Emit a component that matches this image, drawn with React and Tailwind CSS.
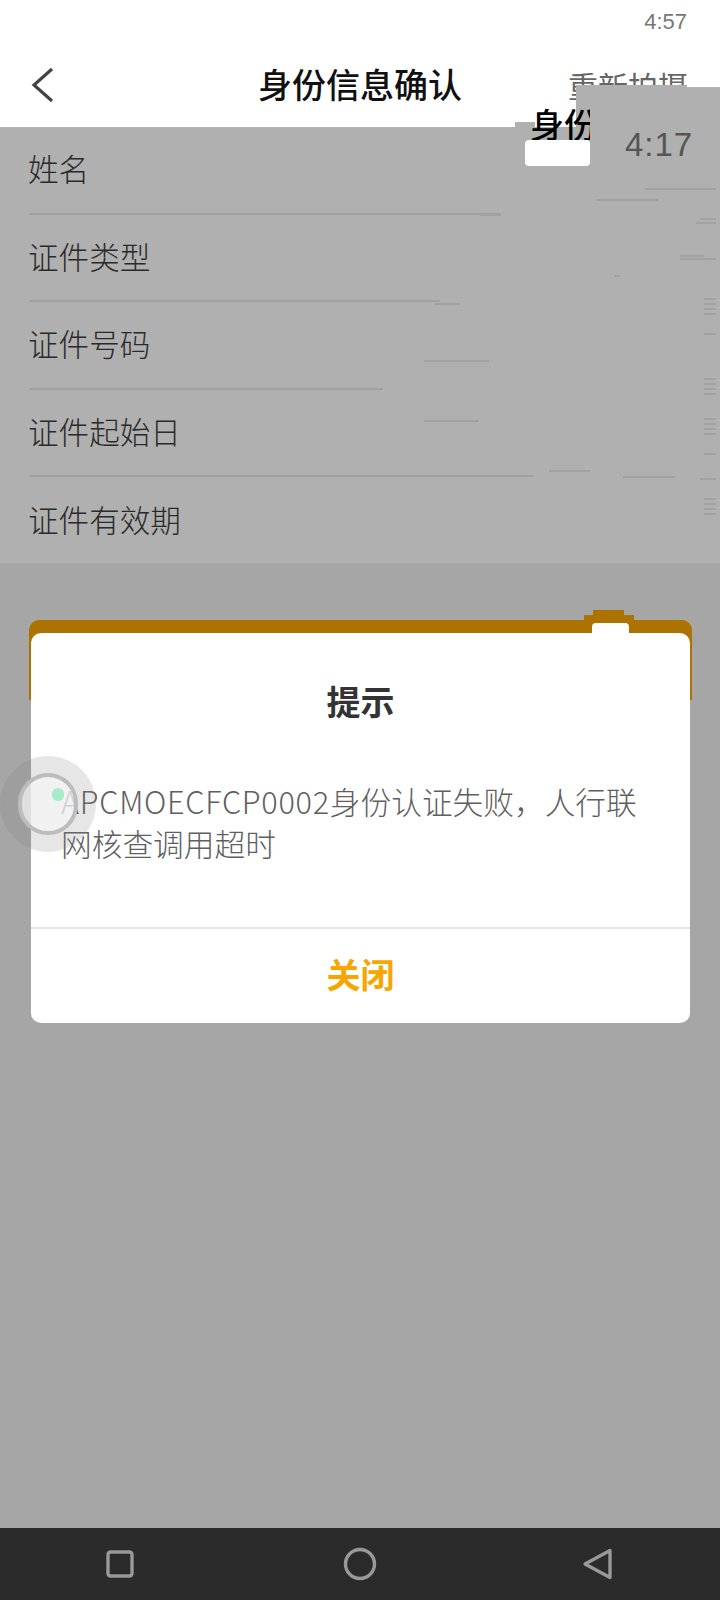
const cjk = "font-['Noto_Sans_CJK_SC',sans-serif]";

const rows = [
  { label: "姓名", line: "w-[472px]" },
  { label: "证件类型", line: "w-[411px]" },
  { label: "证件号码", line: "w-[354px]" },
  { label: "证件起始日", line: "w-[504px]" },
  { label: "证件有效期", line: "" },
];

// leftover ghost lines on the gray panel
const ghostLines = [
  { x: 645, y: 188, w: 71 }, { x: 597, y: 199, w: 61 }, { x: 480, y: 214, w: 21 },
  { x: 700, y: 108, w: 16 }, { x: 700, y: 218, w: 16 }, { x: 696, y: 222, w: 20 },
  { x: 680, y: 255, w: 24 }, { x: 680, y: 258, w: 36 }, { x: 614, y: 275, w: 6 },
  { x: 435, y: 303, w: 25 }, { x: 424, y: 360, w: 65 }, { x: 424, y: 420, w: 55 },
  { x: 549, y: 470, w: 41 }, { x: 623, y: 476, w: 52 }, { x: 700, y: 478, w: 16 },
  { x: 704, y: 298, w: 12 }, { x: 704, y: 303, w: 12 }, { x: 704, y: 308, w: 12 },
  { x: 704, y: 313, w: 12 }, { x: 704, y: 333, w: 12 }, { x: 704, y: 378, w: 12 },
  { x: 704, y: 383, w: 12 }, { x: 704, y: 388, w: 12 }, { x: 704, y: 393, w: 12 },
  { x: 704, y: 418, w: 12 }, { x: 704, y: 423, w: 12 }, { x: 704, y: 428, w: 12 },
  { x: 704, y: 433, w: 12 }, { x: 704, y: 453, w: 12 }, { x: 704, y: 498, w: 12 },
  { x: 704, y: 503, w: 12 }, { x: 704, y: 508, w: 12 }, { x: 704, y: 513, w: 12 },
];

export default function App() {
  return (
    <div className={`relative w-[720px] h-[1600px] overflow-hidden flex flex-col bg-[#a6a6a6] ${cjk}`}>
      {/* Status bar */}
      <div className="h-[44px] bg-white flex items-center justify-end pr-[33px]">
        <span className="font-['Liberation_Sans',sans-serif] text-[22px] leading-none text-[#777777]">4:57</span>
      </div>

      {/* Header */}
      <div className="h-[83px] bg-white relative flex items-center justify-center">
        <svg className="absolute left-[31px] top-[23px]" width="24" height="36" viewBox="0 0 24 36" fill="none">
          <path d="M21 2 L3 18 L21 34" stroke="#444444" strokeWidth="3.2" />
        </svg>
        <span className="text-[34px] leading-none font-medium text-[#111111] -mt-[3px]">身份信息确认</span>
        <span className="absolute left-[568px] top-[26px] text-[30px] leading-none text-[#666666]">重新拍摄</span>
      </div>

      {/* Form rows */}
      <div className="h-[436px] bg-[#b0b0b0] pl-[28px] shrink-0">
        {rows.map((row) => (
          <div key={row.label} className="h-[87.5px] flex flex-col">
            <div className="flex-1 flex items-center pb-[2px] text-[30.6px] leading-none text-[#2a2a2a] font-light">{row.label}</div>
            {row.line && <div className={`ml-[1px] h-[2px] bg-[#a0a0a0] ${row.line}`} />}
          </div>
        ))}
      </div>

      {/* Confirm button, mostly behind the dialog */}
      <div className="ml-[29px] mt-[57px] w-[663px] h-[80px] rounded-t-[10px] bg-[#ad7300]" />
      <div className="flex-1" />

      {/* Nav bar */}
      <div className="h-[72px] bg-[#2b2b2b] grid grid-cols-3 items-center justify-items-center">
        <svg width="28" height="28" viewBox="0 0 28 28" fill="none">
          <rect x="2" y="2" width="24" height="24" rx="2.5" stroke="#999999" strokeWidth="3.4" />
        </svg>
        <svg width="34" height="34" viewBox="0 0 34 34" fill="none">
          <circle cx="17" cy="17" r="14.5" stroke="#999999" strokeWidth="3.4" />
        </svg>
        <svg width="32" height="32" viewBox="0 0 32 32" fill="none" className="-ml-[5px]">
          <path d="M28 2.5 V29.5 L3 16 Z" stroke="#999999" strokeWidth="3.4" strokeLinejoin="round" />
        </svg>
      </div>

      {/* Screen tearing leftovers */}
      {ghostLines.map((l) => (
        <div key={`${l.x}-${l.y}`} className="absolute h-[2px] bg-[#a2a2a2]" style={{ left: l.x, top: l.y, width: l.w }} />
      ))}
      <div className="absolute left-[576px] top-[85px] w-[110px] h-[42px] bg-[#b0b0b0]" />
      <div className="absolute left-[686px] top-[87px] w-[34px] h-[40px] bg-[#b0b0b0]" />
      <div className="absolute left-[515px] top-[122px] w-[20px] h-[5px] bg-[#b0b0b0]" />
      <div className="absolute left-[530px] top-[107px] w-[60px] h-[33px] overflow-hidden text-[34px] leading-none font-medium text-black whitespace-nowrap">身份</div>
      <div className="absolute left-[525px] top-[140px] w-[65px] h-[26px] rounded-[4px] bg-white" />
      <div className="absolute left-[625px] top-[128px] font-['Liberation_Sans',sans-serif] text-[33px] leading-none text-[#555555] tracking-[1px]">4:17</div>
      <div className="absolute left-[593px] top-[610px] w-[31px] h-[6px] bg-[#ad7300]" />
      <div className="absolute left-[584px] top-[615px] w-[50px] h-[8px] bg-[#ad7300]" />

      {/* Dialog */}
      <div className="absolute left-[31px] top-[633px] w-[659px] h-[390px] rounded-[10px] bg-white flex flex-col">
        <div className="h-[294px] flex flex-col">
          <div className="pt-[48px] text-center text-[34px] leading-[40px] font-bold text-[#333333]">提示</div>
          <div className="mt-[59px] pl-[30px] text-[30.7px] leading-[42px] text-[#5f5f5f] font-light whitespace-nowrap">
            <span className="tracking-[0.7px]">APCMOECFCP0002</span>身份认证失败，人行联
            <br />
            网核查调用超时
          </div>
        </div>
        <div className="flex-1 pb-[4px] border-t-2 border-[#e8e8e8] flex items-center justify-center text-[34px] leading-none font-bold text-[#f7a600]">
          关闭
        </div>
      </div>
      <div className="absolute left-[592px] top-[623px] w-[37px] h-[12px] rounded-t-[4px] bg-white" />

      {/* Floating ball */}
      <div className="absolute left-0 top-[756px] w-[96px] h-[96px] rounded-full bg-[#808080]/20 flex items-center justify-center">
        <div className="w-[60px] h-[62px] rounded-full border-[4px] border-[#bcbcbc] bg-[#f4f4f4]/75" />
      </div>
      <div className="absolute left-[52px] top-[788px] w-[12px] h-[13px] rounded-full bg-[#a5ecc8]" />
    </div>
  );
}
